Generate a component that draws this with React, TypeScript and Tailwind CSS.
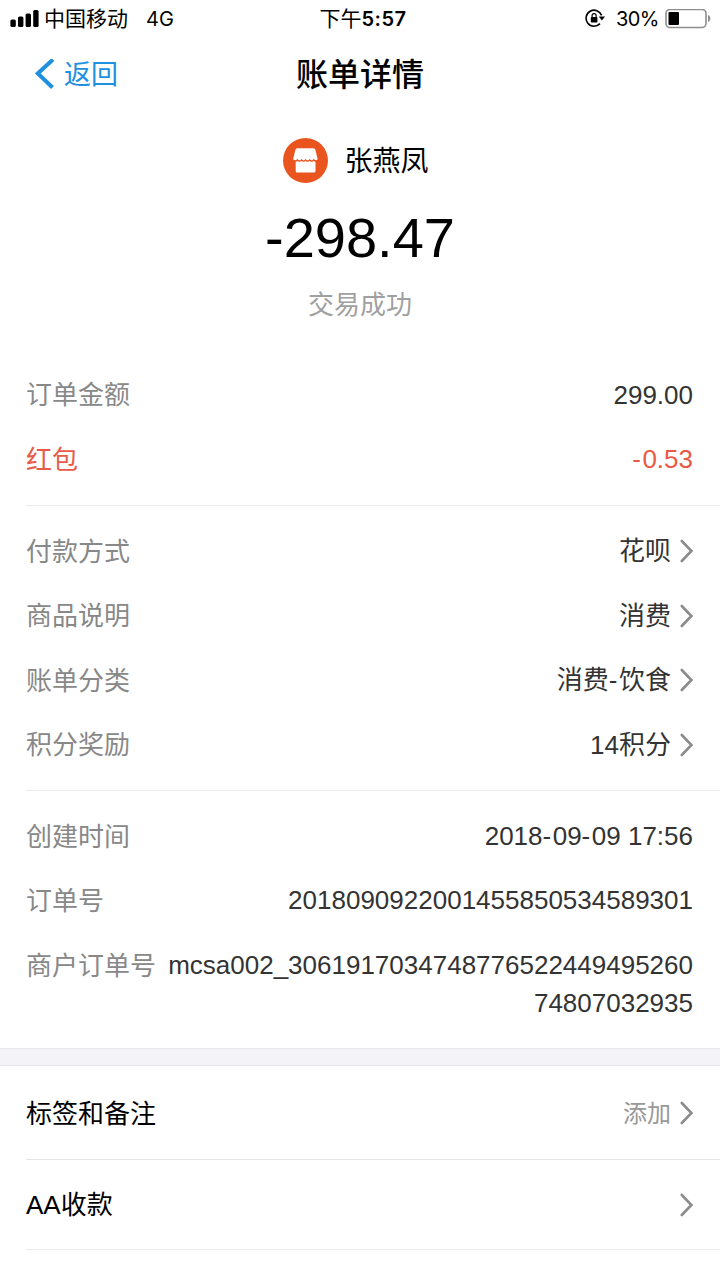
import React from 'react';

type Row = { label: string; value: string; link?: boolean; red?: boolean };

const amountRows: Row[] = [
  { label: '订单金额', value: '299.00' },
  { label: '红包', value: '-0.53', red: true },
];

const detailRows: Row[] = [
  { label: '付款方式', value: '花呗', link: true },
  { label: '商品说明', value: '消费', link: true },
  { label: '账单分类', value: '消费-饮食', link: true },
  { label: '积分奖励', value: '14积分', link: true },
];

function Chevron() {
  return (
    <svg className="ml-[9px] h-6 w-[13px] shrink-0" viewBox="0 0 13 24" fill="none" stroke="#8c8c8c" strokeWidth="2.6">
      <path d="M1.8 2L11.4 12L1.8 22" strokeLinecap="round" strokeLinejoin="miter" />
    </svg>
  );
}

function StatusBar() {
  return (
    <div className="grid h-9 grid-cols-3 items-center pt-px font-['Inter','Noto_Sans_CJK_SC',sans-serif] text-[21px] leading-none text-black">
      <div className="flex items-center pl-2.5">
        <svg className="mr-[5px] h-[18px] w-[29px]" viewBox="0 0 29 18">
          <rect x="0.4" y="9.5" width="5.4" height="7.5" rx="1.6" />
          <rect x="8" y="6.5" width="5.4" height="10.5" rx="1.6" />
          <rect x="15.6" y="3.5" width="5.4" height="13.5" rx="1.6" />
          <rect x="23.2" y="0" width="5.4" height="17" rx="1.6" />
        </svg>
        <span>中国移动</span>
        <span className="ml-[18px] text-[20px]">4G</span>
      </div>
      <div className="whitespace-nowrap pl-1.5 text-center">
        下午<span className="text-[20px] font-semibold tracking-[0.5px]">5:57</span>
      </div>
      <div className="flex items-center justify-end pr-[9px]">
        <svg className="mr-[11px] h-5 w-5" viewBox="0 0 20 20" fill="none" stroke="black">
          <path d="M16.6 6.4A8 8 0 1 0 15 14.6" strokeWidth="1.6" />
          <path d="M13.8 7.6h6.2l-3.1 4z" fill="black" stroke="none" />
          <rect x="5.8" y="8" width="6.6" height="5.4" rx="0.7" fill="black" stroke="none" />
          <path d="M7.1 8.400V6.600a2 2 0 0 1 4 0V8.400" strokeWidth="1.200" />
        </svg>
        <span className="text-[20px] tracking-[-0.5px]">30%</span>
        <svg className="ml-[6px] h-5 w-[46px]" viewBox="0 0 46 20" fill="none">
          <rect x="1" y="0.5" width="40" height="18" rx="4" stroke="#8e8e8e" strokeWidth="1.6" />
          <rect x="3.5" y="3" width="10.5" height="13" rx="1" fill="black" />
          <path d="M43 6c1.7.6 2.3 2 2.3 3.5s-.6 2.9-2.3 3.500z" fill="#8e8e8e" />
        </svg>
      </div>
    </div>
  );
}

function ShopIcon() {
  return (
    <svg className="h-[45px] w-[45px]" viewBox="0 0 45 45">
      <circle cx="22.5" cy="22.5" r="22.5" fill="#e9541f" />
      <path d="M14.4 10.300h16q1.500 0 2 1.500l2.100 8.700q.3 1.700-1.300 1.900H11.600q-1.600-.2-1.300-1.900l2.100-8.700q.5-1.500 2-1.500z" fill="white" />
      <path d="M12.700 20h19.800v13q0 1.500-1.500 1.500H14.200q-1.500 0-1.500-1.500z" fill="white" />
      <path
        d="M10.500 23h1.700q1.500 0 2.200-1 2 2.200 4.100 0 2 2.200 4.100 0 2 2.200 4.100 0 2 2.200 4.100 0 .7 1 2.200 1h1.700"
        fill="none"
        stroke="#e9541f"
        strokeWidth="1.500"
      />
    </svg>
  );
}

// widens the hyphen a little, Liberation's is narrow next to the digits
function Value({ text }: { text: string }) {
  const parts = text.split('-');
  return (
    <span>
      {parts.map((part, i) => (
        <React.Fragment key={i}>
          {i > 0 && <span className="tracking-[1.5px]">-</span>}
          {part}
        </React.Fragment>
      ))}
    </span>
  );
}

function InfoRow({ label, value, link, red }: Row) {
  return (
    <div className={`flex h-[64.4px] items-center justify-between pr-[27px] ${red ? 'text-[#e85946]' : ''}`}>
      <span className={red ? 'pt-0.5' : 'pt-0.5 text-[#888888]'}>{label}</span>
      <span className={`flex items-center pt-px ${red ? '' : 'text-[#333333]'}`}>
        <Value text={value} />
        {link && <Chevron />}
      </span>
    </div>
  );
}

export default function App() {
  return (
    <div className="h-[1280px] w-[720px] overflow-hidden bg-white font-['Liberation_Sans','Noto_Sans_CJK_SC',sans-serif] text-[26px] leading-[38px] text-black">
      <StatusBar />

      <header className="grid h-[74px] grid-cols-3 items-center pt-0.5">
        <div className="flex items-center pl-[35px] text-[27px] text-[#1f8fe0]">
          <svg className="mr-[9px] h-[30px] w-5" viewBox="0 0 20 30" fill="none" stroke="currentColor" strokeWidth="4">
            <path d="M18 0.5L2.8 14.5L17.5 28.5" />
          </svg>
          <span className="pt-px">返回</span>
        </div>
        <h1 className="pt-px text-center text-[32px] font-medium">账单详情</h1>
      </header>

      <section className="flex flex-col items-center pt-7">
        <div className="flex h-[45px] items-center pr-2">
          <ShopIcon />
          <span className="ml-4 pt-[3px] text-[28px]">张燕凤</span>
        </div>
        <div className="mt-[25px] text-[56px] leading-[60px]">-298.47</div>
        <div className="mt-[18px] text-[#a0a0a0]">交易成功</div>
      </section>

      <section className="ml-[26px] mt-[38px] border-b border-[#ebebeb] pb-[14px]">
        {amountRows.map((row) => (
          <InfoRow key={row.label} {...row} />
        ))}
      </section>

      <section className="ml-[26px] border-b border-[#ebebeb] pt-[13px] pb-[14px]">
        {detailRows.map((row) => (
          <InfoRow key={row.label} {...row} />
        ))}
      </section>

      <section className="ml-[26px] pt-[12px] pb-[26px]">
        <InfoRow label="创建时间" value="2018-09-09 17:56" />
        <InfoRow label="订单号" value="2018090922001455850534589301" />
        <div className="flex justify-between pt-[14px] pr-[27px]">
          <span className="shrink-0 pt-px text-[#888888]">商户订单号</span>
          <span className="w-[527px] text-right break-all text-[#333333]">
            mcsa002_306191703474877652244949526074807032935
          </span>
        </div>
      </section>

      <div className="h-[18px] border-y border-[#e8e8ea] bg-[#f3f3f8]" />

      <div className="ml-[26px] flex h-[94px] items-center justify-between border-b border-[#e5e5e5] pr-[27px]">
        <span className="pt-[3px]">标签和备注</span>
        <span className="flex items-center text-2xl text-[#999999]">
          <span className="pt-[3px]">添加</span>
          <Chevron />
        </span>
      </div>
      <div className="ml-[26px] flex h-[90px] items-center justify-between border-b border-[#ebebeb] pr-[27px]">
        <span className="pt-px">AA收款</span>
        <Chevron />
      </div>
    </div>
  );
}
